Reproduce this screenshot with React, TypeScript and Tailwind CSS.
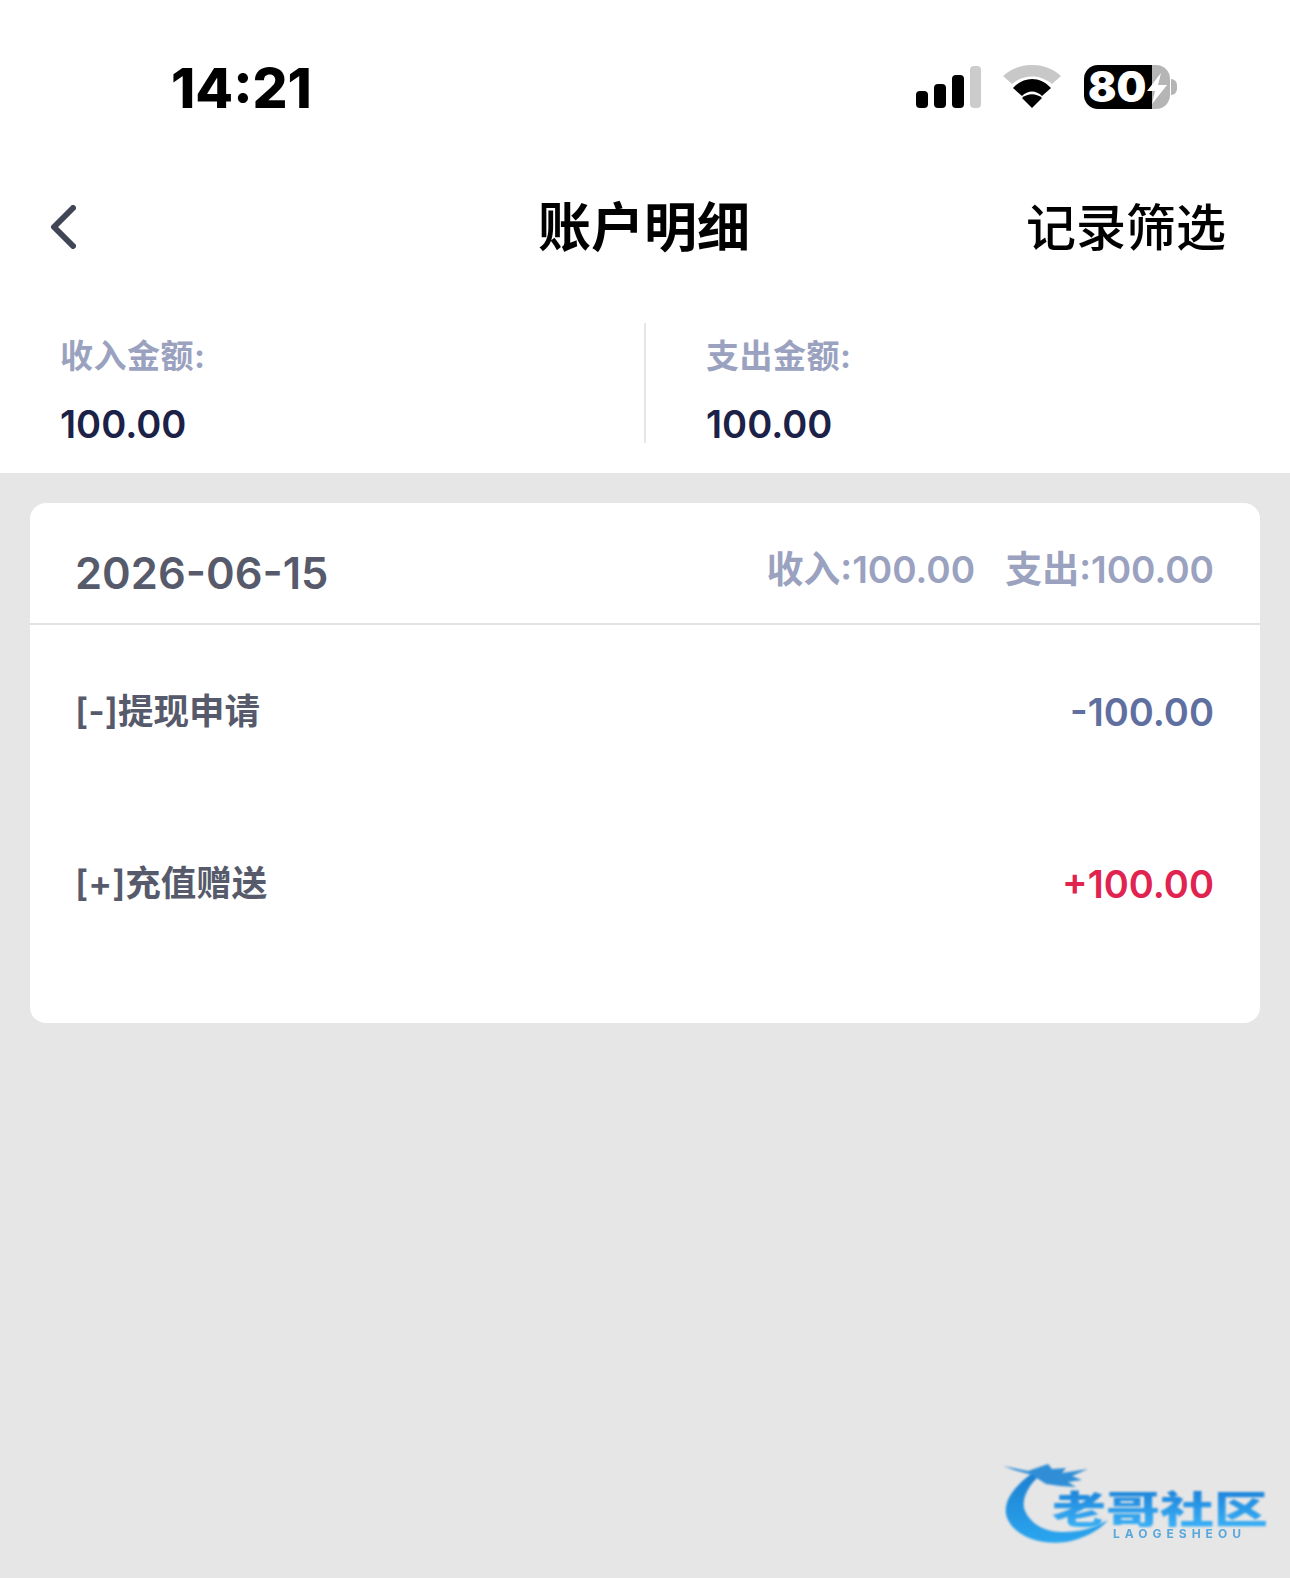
const latin = "font-['Inter','Noto_Sans_CJK_SC',sans-serif]";

function SignalIcon() {
  return (
    <svg width="65" height="42" viewBox="0 0 65 42" className="mr-[22px]">
      <rect x="0" y="25" width="12" height="17" rx="4" fill="#000" />
      <rect x="18" y="18" width="12" height="24" rx="4" fill="#000" />
      <rect x="36" y="9" width="12" height="33" rx="4" fill="#000" />
      <rect x="54" y="0" width="11" height="42" rx="4" fill="#ccc" />
    </svg>
  );
}

function WifiIcon() {
  return (
    <svg width="58" height="43" viewBox="0 0 58 43" className="mr-[23px]">
      <path d="M0 11C16 -3.700 42 -3.700 58 11L49 19C37 9 21 9 9 19Z" fill="#c8c8c8" />
      <path d="M10 23C21 11 37 11 48 23L39 31C33 25 25 25 19 31Z" fill="#000" />
      <path d="M19 33C25 28 33 28 39 33L29 43Z" fill="#000" />
    </svg>
  );
}

function BatteryIcon() {
  return (
    <div className="flex items-center">
      <div className="relative flex h-[44px] w-[86px]">
        <div className="h-full w-[68px] rounded-l-[14px] bg-black" />
        <div className="h-full flex-1 rounded-r-[14px] bg-[#b5b5b5]" />
        <span className="absolute left-[4px] top-0 text-[42px] leading-[44px] font-black text-white font-['Inter',sans-serif]">
          80
        </span>
        <svg width="20" height="31" viewBox="0 0 20 31" className="absolute left-[63px] top-[8px]">
          <path d="M14 0L0 18H8L5 31L20 12H11Z" fill="#fff" />
        </svg>
      </div>
      <div className="ml-[1px] h-[16px] w-[6px] rounded-r-full bg-[#b5b5b5]" />
    </div>
  );
}

function Logo() {
  return (
    <div className="absolute left-[1000px] top-[1460px] h-[90px] w-[280px]">
      <svg width="130" height="90" viewBox="0 0 130 90" className="absolute left-0 top-0 blur-[0.8px]">
        <defs>
          <linearGradient id="swoosh" x1="0" y1="0" x2="0" y2="1">
            <stop offset="0" stopColor="#1c7fd0" />
            <stop offset="1" stopColor="#2ba6f0" />
          </linearGradient>
        </defs>
        <path
          d="M34 12C14 26 4 40 6 54C10 74 38 86 66 82C84 79 100 70 108 60C94 68 80 72 64 72C44 73 28 62 24 48C22 36 30 24 40 15Z"
          fill="url(#swoosh)"
        />
        <path d="M3 6L28 11L48 4L52 9L66 8L62 13L88 9L72 16L82 20L68 22L76 27L60 26L46 24L32 15L14 10Z" fill="#2f8ed6" />
      </svg>
      <span className="absolute left-[52px] top-[27px] origin-left scale-x-[1.42] whitespace-nowrap bg-linear-to-b from-[#1a80d8] to-[#3bb0f5] bg-clip-text text-[38px] leading-[40px] font-black text-transparent blur-[0.8px] font-['Noto_Sans_CJK_SC',sans-serif]">
        老哥社区
      </span>
      <span className="absolute left-[113px] top-[69px] whitespace-nowrap text-[12px] leading-[10px] font-bold tracking-[5px] text-[#5aa7dc] blur-[0.5px] font-['Inter',sans-serif]">
        LAOGESHEOU
      </span>
    </div>
  );
}

function SummaryCol({ label, value, first }: { label: string; value: string; first?: boolean }) {
  return (
    <div className={`flex h-[120px] flex-col ${first ? 'w-[646px] border-r-2 border-[#e6e6e6] pl-[60px]' : 'flex-1 pl-[60px]'}`}>
      <div className={`${latin} mt-[9px] text-[33px] leading-[48px] font-bold tracking-[0.5px] text-[#9aa2c0]`}>{label}</div>
      <div className={`${latin} mt-[22px] text-[38px] leading-[44px] font-semibold text-[#1c2148]`}>{value}</div>
    </div>
  );
}

function DetailRow({ name, amount, color }: { name: string; amount: string; color: string }) {
  return (
    <div className="flex h-[172px] items-start justify-between pl-[45px] pr-[46px] pt-[62px]">
      <span className={`${latin} text-[35.500px] leading-[50px] font-semibold text-[#565a6b]`}>{name}</span>
      <span className={`${latin} text-[38px] leading-[50px] font-semibold ${color}`}>{amount}</span>
    </div>
  );
}

export default function App() {
  return (
    <div className="relative min-h-[1578px] w-[1290px] overflow-hidden bg-[#e6e6e6]">
      <div className="bg-white">
        {/* status bar */}
        <div className="flex h-[176px] items-center justify-between pl-[171px] pr-[113px]">
          <span className="text-[55px] leading-[60px] font-extrabold text-black font-['Inter',sans-serif]">14:21</span>
          <div className="mb-[3px] flex items-center">
            <SignalIcon />
            <WifiIcon />
            <BatteryIcon />
          </div>
        </div>

        {/* nav */}
        <div className="grid h-[102px] grid-cols-[1fr_auto_1fr] items-center pl-[50px] pr-[64px]">
          <svg width="26" height="44" viewBox="0 0 26 44" fill="none">
            <path d="M23 3L4 22L23 41" stroke="#414656" strokeWidth="6" strokeLinecap="round" strokeLinejoin="round" />
          </svg>
          <span className="mb-[6px] ml-[12px] text-[53px] leading-[70px] font-semibold text-black font-['Noto_Sans_CJK_SC',sans-serif]">账户明细</span>
          <span className="mb-[6px] justify-self-end text-[50px] leading-[70px] font-medium text-black font-['Noto_Sans_CJK_SC',sans-serif]">记录筛选</span>
        </div>

        {/* totals */}
        <div className="flex pt-[45px] pb-[30px]">
          <SummaryCol label="收入金额:" value="100.00" first />
          <SummaryCol label="支出金额:" value="100.00" />
        </div>
      </div>

      <div className="mx-[30px] mt-[30px] h-[520px] rounded-[16px] bg-white">
        <div className="flex h-[122px] items-start justify-between border-b-2 border-[#e2e2e2] pl-[45px] pr-[46px] pt-[45px]">
          <span className={`${latin} text-[43.500px] leading-[50px] font-semibold text-[#565a6b]`}>2026-06-15</span>
          <div className="-mt-[3px] flex gap-[30px]">
            <span className={`${latin} text-[37px] leading-[50px] font-semibold text-[#9aa2c0]`}>收入:100.00</span>
            <span className={`${latin} text-[37px] leading-[50px] font-semibold text-[#9aa2c0]`}>支出:100.00</span>
          </div>
        </div>
        <DetailRow name="[-]提现申请" amount="-100.00" color="text-[#5f6f9f]" />
        <DetailRow name="[+]充值赠送" amount="+100.00" color="text-[#e0244f]" />
      </div>

      <Logo />
    </div>
  );
}
